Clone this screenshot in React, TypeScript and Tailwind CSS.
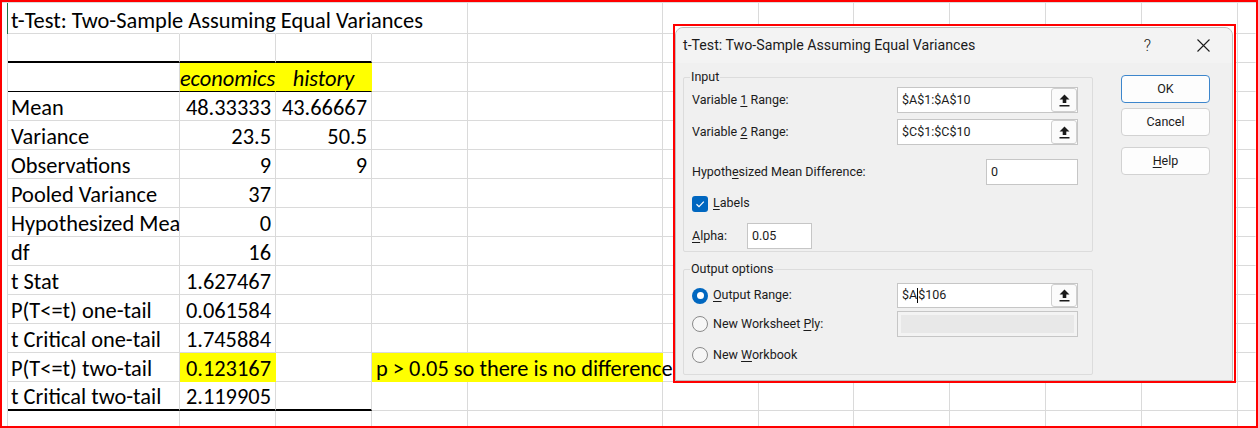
import React from 'react';

type CellProps = {
  w: string;
  r?: string;
  b?: string;
  className?: string;
  children?: React.ReactNode;
};

// one spreadsheet cell; r / b are the right and bottom gridline classes
function Cell({ w, r = 'border-r-[#dadada]', b = 'border-b border-b-[#dadada]', className = '', children }: CellProps) {
  return (
    <div className={`${w} shrink-0 flex items-end pb-[1px] leading-[22px] whitespace-nowrap border-r ${r} ${b} ${className}`}>
      {children}
    </div>
  );
}

function Gutter({ green = false }: { green?: boolean }) {
  return (
    <div
      className={`w-[6px] shrink-0 border-r ${green ? 'border-r-[#217346]' : 'border-r-[#dadada]'}`}
    />
  );
}

// columns F..L
function TailCells() {
  return (
    <>
      <Cell w="w-[96px]" />
      <Cell w="w-[95px]" />
      <Cell w="w-[96px]" />
      <Cell w="w-[96px]" />
      <Cell w="w-[96px]" />
      <Cell w="w-[96px]" />
      <Cell w="flex-1" r="border-r-transparent" />
    </>
  );
}

// columns D..L
function RestCells() {
  return (
    <>
      <Cell w="w-[96px]" />
      <Cell w="w-[195px]" />
      <TailCells />
    </>
  );
}

const stats = [
  ['Mean', '48.33333', '43.66667'],
  ['Variance', '23.5', '50.5'],
  ['Observations', '9', '9'],
  ['Pooled Variance', '37', ''],
  ['Hypothesized Mean Difference', '0', ''],
  ['df', '16', ''],
  ['t Stat', '1.627467', ''],
  ['P(T<=t) one-tail', '0.061584', ''],
  ['t Critical one-tail', '1.745884', ''],
];

function Sheet() {
  const thick = 'border-b-2 border-b-black';
  return (
    <div className="flex flex-col border-t border-t-[#dadada] font-[Carlito,Lato,sans-serif] text-[22.4px] text-black">
      {/* title row */}
      <div className="flex h-[31px]">
        <Gutter green />
        <Cell w="w-[172px]" r="border-r-transparent" className="pl-[3px] overflow-visible">
          t-Test: Two-Sample Assuming Equal Variances
        </Cell>
        <Cell w="w-[96px]" r="border-r-transparent" />
        <Cell w="w-[96px]" r="border-r-transparent" />
        <RestCells />
      </div>

      <div className="flex h-[29px]">
        <Gutter />
        <Cell w="w-[172px]" b={thick} />
        <Cell w="w-[96px]" b={thick} />
        <Cell w="w-[96px]" b={thick} />
        <RestCells />
      </div>

      {/* header */}
      <div className="flex h-[29px]">
        <Gutter />
        <Cell w="w-[172px]" b="border-b border-b-black" />
        <Cell w="w-[96px]" r="border-r-[#ffff00]" b="border-b border-b-black" className="justify-center bg-[#ffff00] italic">
          economics
        </Cell>
        <Cell w="w-[96px]" r="border-r-[#ffff00]" b="border-b border-b-black" className="justify-center bg-[#ffff00] italic">
          history
        </Cell>
        <RestCells />
      </div>

      {stats.map(([label, a, b]) => (
        <div key={label} className="flex h-[29px]">
          <Gutter />
          <Cell w="w-[172px]" className="pl-[3px] overflow-hidden">{label}</Cell>
          <Cell w="w-[96px]" className="justify-end pr-[4px]">{a}</Cell>
          <Cell w="w-[96px]" className="justify-end pr-[4px]">{b}</Cell>
          <RestCells />
        </div>
      ))}

      <div className="flex h-[29px]">
        <Gutter />
        <Cell w="w-[172px]" className="pl-[3px]">P(T&lt;=t) two-tail</Cell>
        <Cell w="w-[96px]" r="border-r-[#ffff00]" b="border-b border-b-[#ffff00]" className="justify-end pr-[4px] bg-[#ffff00]">
          0.123167
        </Cell>
        <Cell w="w-[96px]" />
        <Cell w="w-[291px]" r="border-r-transparent" b="border-b border-b-[#ffff00]" className="pl-[4px] bg-[#ffff00] overflow-visible">
          p &gt; 0.05 so there is no difference
        </Cell>
        <TailCells />
      </div>

      <div className="flex h-[29px]">
        <Gutter />
        <Cell w="w-[172px]" b={thick} className="pl-[3px]">t Critical two-tail</Cell>
        <Cell w="w-[96px]" b={thick} className="justify-end pr-[4px]">2.119905</Cell>
        <Cell w="w-[96px]" b={thick} />
        <RestCells />
      </div>

      <div className="flex h-[29px]">
        <Gutter />
        <Cell w="w-[172px]" />
        <Cell w="w-[96px]" />
        <Cell w="w-[96px]" />
        <RestCells />
      </div>
    </div>
  );
}

function UpArrow() {
  return (
    <svg width="11" height="13" viewBox="0 0 11 13">
      <path d="M5.5 0.5L10.5 5.5H7.3V9H3.7V5.5H0.5Z" fill="#1a1a1a" />
      <rect x="0.5" y="11" width="10" height="1.5" fill="#1a1a1a" />
    </svg>
  );
}

function RangeBox({ h = 'h-[26px]', children }: { h?: string; children?: React.ReactNode }) {
  return (
    <div className={`ml-auto w-[181px] ${h} flex items-center border border-[#c6c6c6] bg-white pl-[4px]`}>
      <span className="flex-1 flex items-center">{children}</span>
      <div className="w-[26px] h-full flex items-center justify-center border border-[#cfcfcf] rounded-[3px] bg-[#fbfbfb]">
        <UpArrow />
      </div>
    </div>
  );
}

function Radio({ on = false }: { on?: boolean }) {
  return on ? (
    <div className="w-[16px] h-[16px] rounded-full bg-[#0067c0] flex items-center justify-center">
      <div className="w-[7px] h-[7px] rounded-full bg-white" />
    </div>
  ) : (
    <div className="w-[16px] h-[16px] rounded-full border border-[#8a8a8a] bg-[#f7f7f7]" />
  );
}

function U({ children }: { children: React.ReactNode }) {
  return <span className="underline underline-offset-2">{children}</span>;
}

function Group({ label, className = '', children }: { label: string; className?: string; children: React.ReactNode }) {
  return (
    <div className={`relative flex flex-col border border-[#dcdcdc] rounded-[2px] pl-[8px] pr-[14px] ${className}`}>
      <span className="absolute left-[6px] -top-[9px] px-[1px] leading-[16px] bg-[#f0f0f0]">{label}</span>
      {children}
    </div>
  );
}

function Button({ primary = false, mt = '', children }: { primary?: boolean; mt?: string; children: React.ReactNode }) {
  return (
    <div
      className={`${mt} w-[89px] h-[28px] flex items-center justify-center rounded-[4px] border bg-[#fdfdfd] ${
        primary ? 'border-[#3d86cc]' : 'border-[#d2d2d2]'
      }`}
    >
      {children}
    </div>
  );
}

function Dialog() {
  return (
    <div className="absolute left-[671px] top-[22px] w-[563px] h-[359px] border-2 border-[#ff0000] bg-white pt-[1px] pr-[1px]">
      <div className="h-full flex flex-col rounded-t-[8px] border border-[#bdbdbd] bg-[#f0f0f0] font-['Segoe_UI',Roboto,sans-serif] text-[12.5px] text-[#1b1b1b]">
        {/* title bar */}
        <div className="h-[35px] shrink-0 flex items-center pl-[7px] pr-[22px] rounded-t-[8px] bg-[#f3f3f3]">
          <span className="text-[14.2px]">t-Test: Two-Sample Assuming Equal Variances</span>
          <span className="ml-auto text-[16px] font-light">?</span>
          <svg className="ml-[46px]" width="13" height="13" viewBox="0 0 13 13">
            <path d="M0.5 0.5L12.5 12.5M12.5 0.5L0.5 12.5" stroke="#1b1b1b" strokeWidth="1.1" />
          </svg>
        </div>

        <div className="flex pl-[7px]">
          <div className="w-[410px] flex flex-col">
            <Group label="Input" className="mt-[14px] pb-[2px]">
              <div className="mt-[9px] h-[26px] flex items-center">
                <span>Variable <U>1</U> Range:</span>
                <RangeBox>$A$1:$A$10</RangeBox>
              </div>
              <div className="mt-[6px] h-[26px] flex items-center">
                <span>Variable <U>2</U> Range:</span>
                <RangeBox>$C$1:$C$10</RangeBox>
              </div>
              <div className="mt-[14px] h-[26px] flex items-center">
                <span>Hypoth<U>e</U>sized Mean Difference:</span>
                <div className="ml-auto w-[92px] h-full flex items-center pl-[4px] border border-[#c6c6c6] bg-white">0</div>
              </div>
              <div className="mt-[10px] h-[17px] flex items-center">
                <div className="w-[16px] h-[16px] rounded-[3px] bg-[#0067c0] flex items-center justify-center">
                  <svg width="12" height="12" viewBox="0 0 12 12">
                    <path d="M2.5 6.2L5 8.6L9.8 3.6" fill="none" stroke="white" strokeWidth="1.2" />
                  </svg>
                </div>
                <span className="ml-[5px]"><U>L</U>abels</span>
              </div>
              <div className="mt-[11px] h-[26px] flex items-center">
                <span className="w-[55px]"><U>A</U>lpha:</span>
                <div className="w-[65px] h-full flex items-center pl-[4px] border border-[#c6c6c6] bg-white">0.05</div>
              </div>
            </Group>

            <Group label="Output options" className="mt-[17px] pb-[6px]">
              <div className="mt-[13px] h-[25px] flex items-center">
                <Radio on />
                <span className="ml-[5px]"><U>O</U>utput Range:</span>
                <RangeBox h="h-[25px]">
                  $A<span className="inline-block w-0 h-[15px] border-l border-l-black" />$106
                </RangeBox>
              </div>
              <div className="mt-[3px] h-[26px] flex items-center">
                <Radio />
                <span className="ml-[5px]">New Worksheet <U>P</U>ly:</span>
                <div className="ml-auto w-[181px] h-full p-[3px] border border-[#c6c6c6] bg-[#f3f3f3]">
                  <div className="h-full bg-[#e8e8e8]" />
                </div>
              </div>
              <div className="mt-[5px] h-[26px] flex items-center">
                <Radio />
                <span className="ml-[5px]">New <U>W</U>orkbook</span>
              </div>
            </Group>
          </div>

          <div className="ml-[28px] pt-[12px] flex flex-col">
            <Button primary>OK</Button>
            <Button mt="mt-[5px]">Cancel</Button>
            <Button mt="mt-[11px]"><U>H</U>elp</Button>
          </div>
        </div>
      </div>
    </div>
  );
}

export default function App() {
  return (
    <div className="relative w-[1258px] h-[428px] overflow-hidden border-2 border-[#ff0000] bg-white">
      <Sheet />
      <Dialog />
    </div>
  );
}
